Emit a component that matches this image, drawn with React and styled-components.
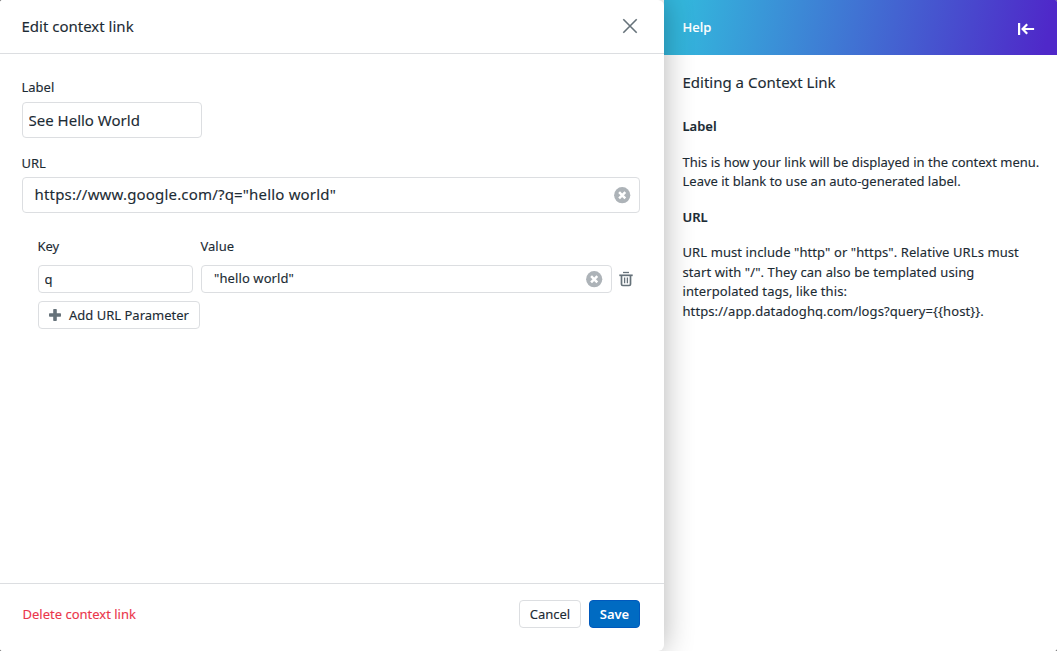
import React from "react";
import styled, { createGlobalStyle } from "styled-components";

const GlobalStyle = createGlobalStyle`
  *, *::before, *::after { box-sizing: border-box; }
  body {
    margin: 0;
    background: #4a4a4c;
    color: #1c2b34;
    font-family: "Noto Sans", "Open Sans", sans-serif;
    font-size: 13px;
    -webkit-text-stroke: 0.12px;
  }
  button, input { font: inherit; color: inherit; letter-spacing: inherit; }
`;

const Screen = styled.div`
  display: flex;
  width: 1057px;
  height: 651px;
  overflow: hidden;
  border-radius: 2px;
  background: #fff;
`;

const Dialog = styled.main`
  position: relative;
  z-index: 1;
  display: flex;
  flex-direction: column;
  flex: 0 0 664px;
  background: #fff;
  border-radius: 2px 6px 6px 2px;
  box-shadow: 0 0 30px rgba(0, 0, 0, 0.3);
`;

const DialogHeader = styled.header`
  display: flex;
  align-items: center;
  justify-content: space-between;
  height: 54px;
  padding: 0 26px 1px 21.5px;
  border-bottom: 1px solid #dcdee1;
`;

const Title = styled.h1`
  margin: 0;
  font-size: 15px;
  line-height: 20px;
  font-weight: 400;
`;

const IconButton = styled.button`
  display: flex;
  flex: none;
  padding: 0;
  border: 0;
  background: none;
  color: ${(p) => p.$color || "#66727a"};
`;

const Form = styled.form`
  flex: 1;
  padding: 23px 24px 0 22px;
`;

const Field = styled.label`
  display: flex;
  flex-direction: column;
  width: ${(p) => p.$width || "auto"};
  margin-bottom: ${(p) => p.$after || 0}px;
`;

const FieldLabel = styled.span`
  line-height: 20px;
  margin-left: -0.5px;
  margin-bottom: ${(p) => p.$gap}px;
`;

const InputFrame = styled.span`
  display: flex;
  align-items: center;
  height: ${(p) => (p.$large ? 36 : 28)}px;
  padding: 0 8.5px 0 ${(p) => p.$inset}px;
  border: 1px solid #dcdee1;
  border-radius: 4px;
  font-size: ${(p) => (p.$large ? 15 : 13)}px;
  letter-spacing: ${(p) => p.$tracking || 0}px;
`;

const Input = styled.input`
  flex: 1;
  min-width: 0;
  height: 20px;
  padding: 0;
  border: 0;
  outline: 0;
  background: none;
  margin-bottom: ${(p) => p.$lift || 0}px;
`;

const Params = styled.section`
  padding-left: 16px;
`;

const ParamRow = styled.div`
  display: flex;
  align-items: flex-end;
  gap: 8px;
  margin-bottom: 8px;
`;

const TrashSlot = styled.div`
  display: flex;
  align-items: center;
  height: 28px;
  margin-left: -1px;
`;

const Button = styled.button`
  display: inline-flex;
  align-items: center;
  justify-content: center;
  width: ${(p) => p.$width}px;
  height: 28px;
  padding: 0;
  gap: 8px;
  white-space: nowrap;
  border: 1px solid ${(p) => (p.$primary ? "#0059bd" : "#dcdee1")};
  border-radius: 4px;
  background: ${(p) => (p.$primary ? "#006bc2" : "#fff")};
  color: ${(p) => (p.$primary ? "#fff" : "#1c2b34")};
  font-weight: ${(p) => (p.$primary ? 600 : 400)};
  -webkit-text-stroke: ${(p) => (p.$primary ? 0 : 0.12)}px;
`;

const Footer = styled.footer`
  display: flex;
  align-items: center;
  gap: 8px;
  height: 68px;
  padding: 0 24px 7px 22.5px;
  border-top: 1px solid #dcdee1;
`;

const DeleteButton = styled.button`
  margin-right: auto;
  padding: 0;
  border: 0;
  background: none;
  color: #eb364b;
`;

const HelpPanel = styled.aside`
  flex: 1;
  min-width: 0;
`;

const HelpHeader = styled.header`
  display: flex;
  align-items: center;
  justify-content: space-between;
  height: 55px;
  padding: 3px 22px 0 18.5px;
  color: #fff;
  font-weight: 500;
  background: linear-gradient(100deg, #33b6dc 5%, #4f28c9 97%);
`;

const HelpLabel = styled.span`
  padding-bottom: 4px;
`;

const HelpBody = styled.div`
  padding: 17px 12px 0 18.5px;
  line-height: 19.5px;
`;

const HelpTitle = styled.h2`
  margin: 0 0 25px;
  font-size: 15px;
  line-height: 20px;
  font-weight: 400;
`;

const HelpHeading = styled.h3`
  margin: 0 0 16px;
  font-size: 13px;
  font-weight: 600;
`;

const HelpText = styled.p`
  margin: 0 0 16px;
  letter-spacing: ${(p) => p.$tracking || 0}px;
`;

const CloseIcon = () => (
  <svg width="16" height="16" viewBox="0 0 16 16" fill="none" stroke="currentColor" strokeWidth="1.6">
    <path d="M1.3 1.3 14.7 14.7M14.7 1.3 1.3 14.7" />
  </svg>
);

const ClearIcon = () => (
  <svg width="17" height="17" viewBox="0 0 17 17">
    <circle cx="8.2" cy="8.2" r="8.1" fill="currentColor" />
    <path d="M5.1 5.1 11.3 11.3M11.3 5.1 5.1 11.3" stroke="#fff" strokeWidth="2.5" />
  </svg>
);

const TrashIcon = () => (
  <svg width="14" height="16" viewBox="0 0 14 16" fill="none" stroke="currentColor">
    <path d="M4 1.5h6" strokeWidth="1.3" />
    <path d="M.3 4.3h13.4" strokeWidth="1.7" />
    <path d="M2.5 4.3v8.9q0 1.3 1.3 1.3h6.4q1.3 0 1.3-1.3V4.3" strokeWidth="1.7" />
    <path d="M5.6 6.5v5.7M8.4 6.5v5.7" strokeWidth="1.3" />
  </svg>
);

const PlusIcon = () => (
  <svg width="12" height="12" viewBox="0 0 12 12" fill="#66727a">
    <path d="M4.9 0h2.2q.7 0 .7.7v3.5h3.5q.7 0 .7.7v2.2q0 .7-.7.7H7.8v3.5q0 .7-.7.7H4.9q-.7 0-.7-.7V7.8H.7Q0 7.8 0 7.1V4.9q0-.7.7-.7h3.5V.7q0-.7.7-.7z" />
  </svg>
);

const CollapseIcon = () => (
  <svg width="17" height="12" viewBox="0 0 17 12" fill="none" stroke="currentColor" strokeWidth="2.2">
    <path d="M1.1 0v12M16.1 6H5.2M9.2 1.3 4.6 6l4.6 4.7" />
  </svg>
);

export default function App() {
  return (
    <>
      <GlobalStyle />
      <Screen>
        <Dialog>
          <DialogHeader>
            <Title>Edit context link</Title>
            <IconButton aria-label="Close"><CloseIcon /></IconButton>
          </DialogHeader>
          <Form>
            <Field $width="180px" $after={15}>
              <FieldLabel $gap={5}>Label</FieldLabel>
              <InputFrame $large $inset={5.5}>
                <Input defaultValue="See Hello World" $lift={1} />
              </InputFrame>
            </Field>
            <Field $after={23}>
              <FieldLabel $gap={4}>URL</FieldLabel>
              <InputFrame $large $inset={11.5} $tracking={0.18}>
                <Input defaultValue={'https://www.google.com/?q="hello world"'} $lift={2} />
                <IconButton type="button" aria-label="Clear URL" $color="#adb3b8"><ClearIcon /></IconButton>
              </InputFrame>
            </Field>
            <Params>
              <ParamRow>
                <Field $width="155px">
                  <FieldLabel $gap={9}>Key</FieldLabel>
                  <InputFrame $inset={5.5}>
                    <Input defaultValue="q" />
                  </InputFrame>
                </Field>
                <Field $width="411px">
                  <FieldLabel $gap={9}>Value</FieldLabel>
                  <InputFrame $inset={12} $tracking={0.1}>
                    <Input defaultValue={'"hello world"'} $lift={2} />
                    <IconButton type="button" aria-label="Clear value" $color="#adb3b8"><ClearIcon /></IconButton>
                  </InputFrame>
                </Field>
                <TrashSlot>
                  <IconButton type="button" aria-label="Remove parameter"><TrashIcon /></IconButton>
                </TrashSlot>
              </ParamRow>
              <Button type="button" $width={162}><PlusIcon />Add URL Parameter</Button>
            </Params>
          </Form>
          <Footer>
            <DeleteButton>Delete context link</DeleteButton>
            <Button $width={62}>Cancel</Button>
            <Button $width={51} $primary>Save</Button>
          </Footer>
        </Dialog>
        <HelpPanel>
          <HelpHeader>
            <HelpLabel>Help</HelpLabel>
            <IconButton aria-label="Collapse help" $color="#fff"><CollapseIcon /></IconButton>
          </HelpHeader>
          <HelpBody>
            <HelpTitle>Editing a Context Link</HelpTitle>
            <HelpHeading>Label</HelpHeading>
            <HelpText>
              This is how your link will be displayed in the context menu. Leave it blank to use an auto-generated label.
            </HelpText>
            <HelpHeading>URL</HelpHeading>
            <HelpText $tracking={0.09}>
              URL must include "http" or "https". Relative URLs must start with "/". They can also be templated using
              interpolated tags, like this: {"https://app.datadoghq.com/logs?query={{host}}."}
            </HelpText>
          </HelpBody>
        </HelpPanel>
      </Screen>
    </>
  );
}
